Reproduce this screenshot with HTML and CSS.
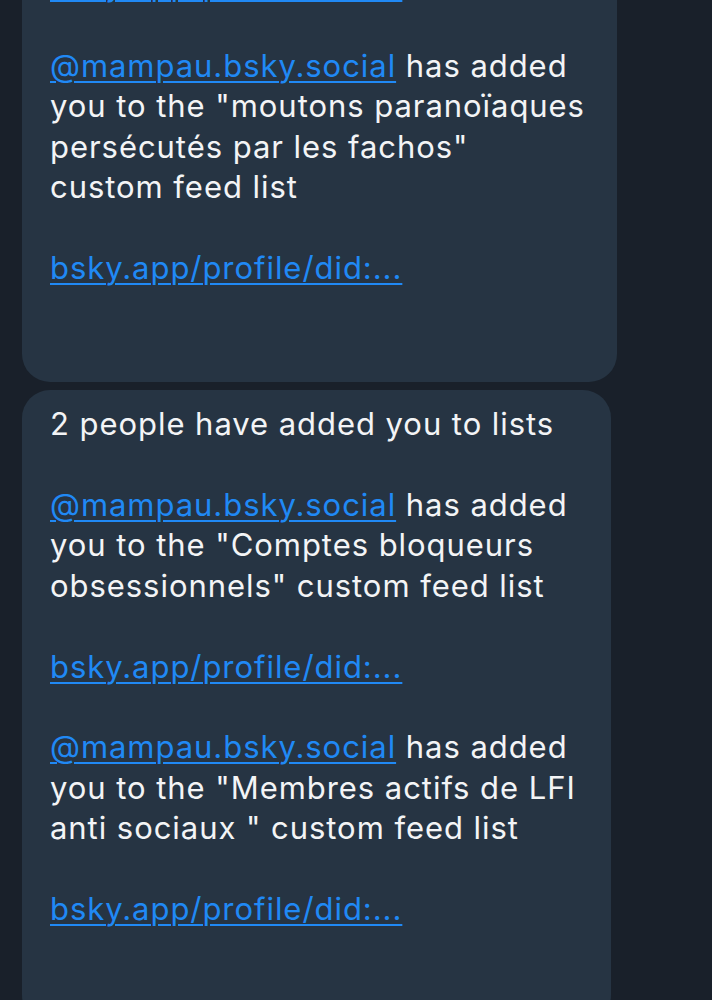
FILE: index.html
```html
<!DOCTYPE html>
<html lang="fr">
<head>
<meta charset="utf-8">
<title>Notifications</title>
<link rel="stylesheet" href="styles.css">
</head>
<body>
<main class="thread">
  <div class="bubble bubble-first">
    <p class="msg"><a class="link" href="#">bsky.app/profile/did:...</a><br><br><a class="link" href="#">@mampau.bsky.social</a> has added<br>you to the "moutons paranoïaques<br>persécutés par les fachos"<br>custom feed list<br><br><a class="link" href="#">bsky.app/profile/did:...</a><br><br>&nbsp;</p>
  </div>
  <div class="bubble bubble-second">
    <p class="msg">2 people have added you to lists<br><br><a class="link" href="#">@mampau.bsky.social</a> has added<br>you to the "Comptes bloqueurs<br>obsessionnels" custom feed list<br><br><a class="link" href="#">bsky.app/profile/did:...</a><br><br><a class="link" href="#">@mampau.bsky.social</a> has added<br>you to the "Membres actifs de LFI<br>anti sociaux " custom feed list<br><br><a class="link" href="#">bsky.app/profile/did:...</a><br><br>&nbsp;</p>
  </div>
</main>
</body>
</html>
```
FILE: styles.css
```css
html, body {
  margin: 0;
  padding: 0;
  background: #19202a;
}
body {
  font-family: Inter, "Noto Sans", sans-serif;
  overflow: hidden;
  height: 1000px;
}
.thread {
  display: flex;
  flex-direction: column;
  align-items: flex-start;
  gap: 8px;
  padding-left: 22px;
  margin-top: -49px;
}
.bubble {
  background: #263443;
  border-radius: 28px;
  padding: 14px 0 13px 28px;
  box-sizing: border-box;
}
.bubble-first {
  width: 595px;
}
.bubble-second {
  width: 589px;
}
.msg {
  margin: 0;
  color: #f3f4f6;
  font-size: 31px;
  letter-spacing: 0.95px;
  line-height: 40.4px;
  white-space: nowrap;
}
.link {
  color: #2089f5;
  text-decoration: underline;
  text-decoration-thickness: 2px;
  text-underline-offset: 4px;
}
```
